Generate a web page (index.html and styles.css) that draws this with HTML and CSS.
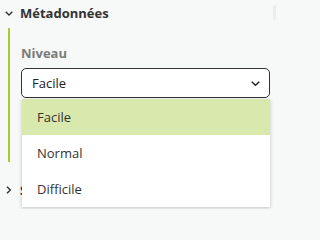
FILE: index.html
```html
<!DOCTYPE html>
<html lang="fr">
<head>
<meta charset="utf-8">
<title>Métadonnées</title>
<link rel="stylesheet" href="styles.css">
</head>
<body>
<div class="panel">
  <div class="edge"></div>
  <div class="section">
    <div class="head">
      <svg class="chev" width="8" height="5" viewBox="0 0 8 5"><path d="M0.7 0.7 L4 4 L7.3 0.7" fill="none" stroke="#333" stroke-width="1.4"/></svg>
      <span class="title">Métadonnées</span>
    </div>
    <div class="body">
      <div class="label">Niveau</div>
      <div class="field">
        <div class="select">
          <span>Facile</span>
          <svg width="9" height="5" viewBox="0 0 9 5"><path d="M0.7 0.7 L4.5 4.2 L8.3 0.7" fill="none" stroke="#222" stroke-width="1.5"/></svg>
        </div>
        <ul class="menu">
          <li class="opt active">Facile</li>
          <li class="opt">Normal</li>
          <li class="opt">Difficile</li>
        </ul>
      </div>
    </div>
  </div>
  <div class="section closed">
    <div class="head">
      <svg class="chev" width="8" height="8" viewBox="0 0 8 8"><path d="M2 0.8 L5.4 4 L2 7.2" fill="none" stroke="#333" stroke-width="1.4"/></svg>
      <span class="title">Statistiques</span>
    </div>
  </div>
</div>
</body>
</html>
```
FILE: styles.css
```css
html, body {
  margin: 0;
  padding: 0;
  background: #f7f8f8;
}
body {
  font-family: "Open Sans", "Noto Sans", sans-serif;
  color: #333;
  width: 276px;
  height: 209px;
  overflow: hidden;
}
.panel {
  position: relative;
  height: 209px;
}
.edge {
  position: absolute;
  right: 0;
  top: 5px;
  width: 3px;
  height: 15px;
  background: #ebeced;
  border-radius: 2px 0 0 2px;
}
.head {
  height: 26px;
  display: flex;
  align-items: center;
  gap: 7px;
  padding-left: 5px;
}
.closed .head {
  margin-top: 15px;
}
.title {
  font-size: 13px;
  font-weight: 700;
  color: #333;
}
.body {
  margin-top: 2px;
  margin-left: 8px;
  border-left: 2px solid #a8c93a;
  padding: 16px 6px 64px 11px;
}
.label {
  font-size: 13px;
  font-weight: 700;
  color: #7b7b7b;
  line-height: 18px;
  margin-bottom: 6px;
}
.field {
  position: relative;
}
.select {
  height: 28px;
  border: 1px solid #333;
  border-radius: 5px;
  background: #fff;
  display: flex;
  align-items: center;
  justify-content: space-between;
  padding: 0 9px 0 10px;
  font-size: 13px;
  color: #222;
}
.menu {
  position: absolute;
  top: calc(100% + 1px);
  left: 1px;
  right: 0;
  margin: 0;
  padding: 0;
  list-style: none;
  background: #fff;
  box-shadow: 0 1px 4px rgba(0, 0, 0, 0.22);
  z-index: 2;
}
.opt {
  height: 36px;
  line-height: 36px;
  padding-left: 15px;
  font-size: 13px;
  color: #333;
}
.opt.active {
  background: #d9e9ae;
}
```
